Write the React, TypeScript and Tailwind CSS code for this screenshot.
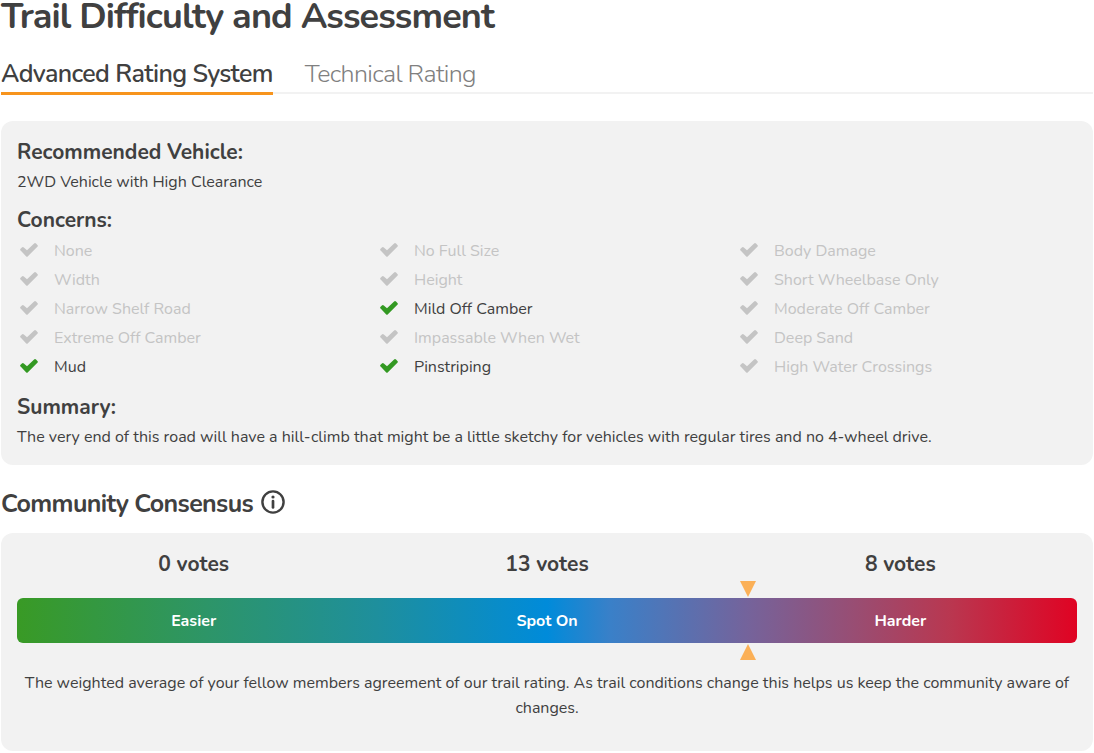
import { useState } from "react";
import clsx from "clsx";

const tabs = ["Advanced Rating System", "Technical Rating"];

const concerns = [
  { label: "None", active: false },
  { label: "No Full Size", active: false },
  { label: "Body Damage", active: false },
  { label: "Width", active: false },
  { label: "Height", active: false },
  { label: "Short Wheelbase Only", active: false },
  { label: "Narrow Shelf Road", active: false },
  { label: "Mild Off Camber", active: true },
  { label: "Moderate Off Camber", active: false },
  { label: "Extreme Off Camber", active: false },
  { label: "Impassable When Wet", active: false },
  { label: "Deep Sand", active: false },
  { label: "Mud", active: true },
  { label: "Pinstriping", active: true },
  { label: "High Water Crossings", active: false },
];

const votes = [
  { label: "Easier", count: 0 },
  { label: "Spot On", count: 13 },
  { label: "Harder", count: 8 },
];

// weighted average of the votes, in percent of the bar
const average = 69;

function CheckIcon({ className }: { className?: string }) {
  return (
    <svg viewBox="0 0 18 14" fill="none" className={className} aria-hidden="true">
      <path
        d="M0.6 7.6a1.3 1.3 0 0 1 0-1.9L1.9 4.4a1.3 1.3 0 0 1 1.9 0L7 7.3 14.1 0.6a1.3 1.3 0 0 1 1.9 0L17.4 1.9a1.3 1.3 0 0 1 0 1.9L7.9 13.2a1.3 1.3 0 0 1-1.9 0Z"
        fill="currentColor"
      />
    </svg>
  );
}

function InfoIcon() {
  return (
    <svg viewBox="0 0 24 24" fill="none" className="size-6" aria-hidden="true">
      <circle cx="12" cy="12" r="10.6" stroke="currentColor" strokeWidth="2.4" />
      <circle cx="12" cy="7" r="1.6" fill="currentColor" />
      <path d="M12 11v6.4" stroke="currentColor" strokeWidth="2.7" strokeLinecap="round" />
    </svg>
  );
}

export default function App() {
  const [tab, setTab] = useState(0);

  return (
    <main className="px-px pb-px font-[Nunito,Lato,sans-serif] text-base text-[#404040]">
      <h1 className="text-4xl leading-[34px] font-bold tracking-tight">Trail Difficulty and Assessment</h1>

      <div role="tablist" className="mt-6 flex gap-8 border-b-2 border-[#f2f2f2] text-[25px] leading-8 tracking-tight">
        {tabs.map((name, idx) => (
          <button
            key={name}
            type="button"
            role="tab"
            aria-selected={tab === idx}
            onClick={() => setTab(idx)}
            className={clsx(
              "-mb-[3px] border-b-3 pb-0.5",
              tab === idx ? "border-[#f7941d] font-semibold" : "border-transparent font-light text-[#808080]"
            )}
          >
            {name}
          </button>
        ))}
      </div>

      <section className="mt-[27px] rounded-xl bg-[#f2f2f2] px-4 pt-[17px] pb-4">
        <h2 className="text-[21px] leading-7 font-bold">Recommended Vehicle:</h2>
        <p className="mt-1">2WD Vehicle with High Clearance</p>

        <h2 className="mt-3 text-[21px] leading-7 font-bold">Concerns:</h2>
        <ul className="mt-0.5 grid grid-cols-3 gap-x-5">
          {concerns.map((concern) => (
            <li
              key={concern.label}
              className={clsx("flex h-[29px] items-center gap-4 pl-[3px]", !concern.active && "text-[#c4c4c4]")}
            >
              <CheckIcon className={clsx("mb-0.5 w-[18px]", concern.active && "text-[#339922]")} />
              {concern.label}
            </li>
          ))}
        </ul>

        <h2 className="mt-3 text-[21px] leading-7 font-bold">Summary:</h2>
        <p className="mt-1">
          The very end of this road will have a hill-climb that might be a little sketchy for vehicles with regular
          tires and no 4-wheel drive.
        </p>
      </section>

      <div className="mt-[23px] flex items-center gap-2">
        <h2 className="text-[25px] leading-8 font-bold tracking-tight">Community Consensus</h2>
        <button type="button" aria-label="About the community consensus" className="pb-1">
          <InfoIcon />
        </button>
      </div>

      <section className="mt-[13px] rounded-xl bg-[#f2f2f2] px-4 pt-[17px] pb-[30px] text-center">
        <div className="grid grid-cols-3 text-[21px] leading-7 font-bold">
          {votes.map((vote) => (
            <div key={vote.label}>{vote.count} votes</div>
          ))}
        </div>

        <div className="relative mt-5">
          <div className="grid h-[45px] grid-cols-3 items-center rounded-md bg-[linear-gradient(90deg,#399a25,#2d9568_18%,#1e8f9d_34%,#008bda_50%,#3a80c8_56%,#75639b_69%,#9c4b6f_80%,#b93750_88%,#e00323)] font-bold text-white">
            {votes.map((vote) => (
              <div key={vote.label}>{vote.label}</div>
            ))}
          </div>
          <svg
            viewBox="0 0 16 80"
            className="absolute -top-[17px] h-20 w-4 -translate-x-1/2 text-[#fbb057]"
            style={{ left: `${average}%` }}
            aria-hidden="true"
          >
            <path d="M0 0h16L8 16ZM0 79h16L8 63Z" fill="currentColor" />
          </svg>
        </div>

        <p className="mt-7 leading-[25px]">
          The weighted average of your fellow members agreement of our trail rating. As trail conditions change this
          helps us keep the community aware of changes.
        </p>
      </section>
    </main>
  );
}
